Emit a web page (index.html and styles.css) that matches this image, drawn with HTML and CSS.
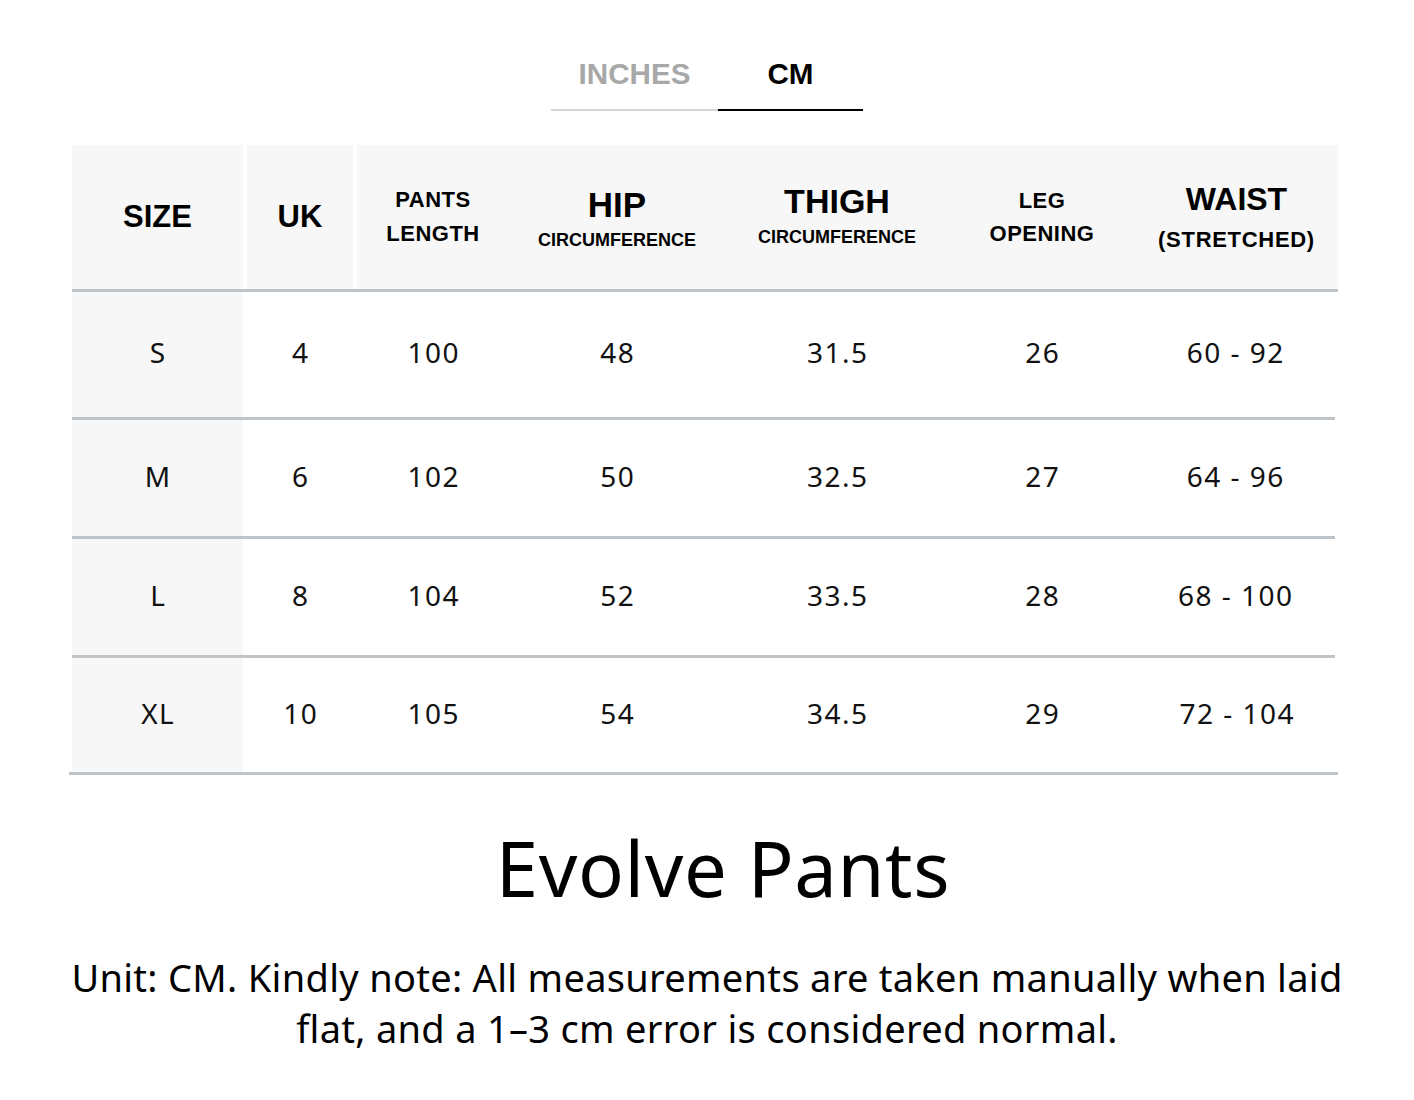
FILE: index.html
```html
<!DOCTYPE html>
<html lang="en">
<head>
<meta charset="utf-8">
<title>Evolve Pants – Size Chart</title>
<link rel="stylesheet" href="styles.css">
</head>
<body>
<div class="page">
  <div class="tabs">
    <div class="tab tab-inches">INCHES</div>
    <div class="tab tab-cm">CM</div>
  </div>

  <div class="chart">
    <div class="row head">
      <div class="hcell c-size"><span class="h-single">SIZE</span></div>
      <div class="hcell c-uk"><span class="h-single">UK</span></div>
      <div class="hcell c-pants"><span class="h-pair">PANTS</span><span class="h-pair">LENGTH</span></div>
      <div class="hcell c-hip"><span class="h-main">HIP</span><span class="h-sub">CIRCUMFERENCE</span></div>
      <div class="hcell c-thigh"><span class="h-main">THIGH</span><span class="h-sub">CIRCUMFERENCE</span></div>
      <div class="hcell c-leg"><span class="h-pair">LEG</span><span class="h-pair">OPENING</span></div>
      <div class="hcell c-waist"><span class="h-main">WAIST</span><span class="h-sub">(STRETCHED)</span></div>
    </div>

    <div class="row body r1">
      <div class="cell c-size">S</div><div class="cell c-uk">4</div><div class="cell">100</div><div class="cell">48</div><div class="cell">31.5</div><div class="cell">26</div><div class="cell">60 - 92</div>
    </div>
    <div class="row body r2">
      <div class="cell c-size">M</div><div class="cell c-uk">6</div><div class="cell">102</div><div class="cell">50</div><div class="cell">32.5</div><div class="cell">27</div><div class="cell">64 - 96</div>
    </div>
    <div class="row body r3">
      <div class="cell c-size">L</div><div class="cell c-uk">8</div><div class="cell">104</div><div class="cell">52</div><div class="cell">33.5</div><div class="cell">28</div><div class="cell">68 - 100</div>
    </div>
    <div class="row body r4 last">
      <div class="cell c-size">XL</div><div class="cell c-uk">10</div><div class="cell">105</div><div class="cell">54</div><div class="cell">34.5</div><div class="cell">29</div><div class="cell">72 - 104</div>
    </div>
  </div>

  <h1 class="title">Evolve Pants</h1>
  <p class="note">Unit: CM. Kindly note: All measurements are taken manually when laid<br>flat, and a 1–3 cm error is considered normal.</p>
</div>
</body>
</html>
```

FILE: styles.css
```css
* { box-sizing: border-box; }

html, body {
  margin: 0;
  padding: 0;
  background: #ffffff;
}

body {
  font-family: "Noto Sans", "Open Sans", sans-serif;
  color: #111111;
}

.page {
  width: 1414px;
  padding-top: 59px;
}

/* ---------- tabs ---------- */
.tabs {
  display: flex;
  justify-content: flex-start;
  margin-left: 551px;
}

.tab {
  font-family: "Liberation Sans", Arial, sans-serif;
  font-weight: 700;
  font-size: 29.6px;
  line-height: 30px;
  padding-bottom: 20px;
  text-align: center;
  border-bottom: 2px solid #d6d6d6;
}

.tab-inches {
  width: 167px;
  color: #a8a8a8;
}

.tab-cm {
  width: 145px;
  color: #000000;
  border-bottom-color: #000000;
}

/* ---------- chart ---------- */
.chart {
  margin-top: 34px;
  margin-left: 69px;
  width: 1269px;
  padding-left: 3px;
}

.row {
  display: grid;
  grid-template-columns: 175px 110px 152px 216px 224px 186px 1fr;
  border-bottom: 3px solid #bec4c7;
}

.row.body.r1, .row.body.r2, .row.body.r3 {
  margin-right: 3px;
}

.row.last {
  margin-left: -3px;
  padding-left: 3px;
}

.row.head { height: 147px; }
.row.r1 { height: 128px; }
.row.r2 { height: 119px; }
.row.r3 { height: 119px; }
.row.r4 { height: 117px; }

.hcell {
  background: #f7f7f7;
  display: flex;
  flex-direction: column;
  align-items: center;
  justify-content: center;
  font-family: "Liberation Sans", Arial, sans-serif;
  font-weight: 700;
  color: #000000;
  text-align: center;
}

.hcell.c-size, .hcell.c-uk {
  border-right: 4px solid #ffffff;
}

.h-single {
  font-size: 31px;
  line-height: 36px;
}

.h-pair {
  font-size: 22px;
  line-height: 33px;
  letter-spacing: 0.5px;
}

.c-pants .h-pair { line-height: 34px; }

.h-main { font-size: 34px; }
.h-sub { font-size: 18px; }

.c-hip .h-main { font-size: 35px; line-height: 46px; }
.c-hip .h-sub { line-height: 25px; }

.c-thigh .h-main { line-height: 41px; }
.c-thigh .h-sub { line-height: 31px; }

.c-waist .h-main { font-size: 32px; line-height: 45px; }
.c-waist .h-sub { font-size: 22px; line-height: 36px; letter-spacing: 0.7px; }

.cell {
  display: flex;
  align-items: center;
  justify-content: center;
  padding-bottom: 5px;
  padding-left: 1.5px;
  font-size: 28px;
  letter-spacing: 1.5px;
  color: #111111;
}

.cell.c-size {
  background: #f7f7f7;
  border-right: 4px solid transparent;
  background-clip: padding-box;
}

.cell.c-uk {
  padding-right: 4px;
}

/* ---------- title & note ---------- */
.title {
  margin: 56px 0 0;
  padding-left: 32px;
  font-size: 76px;
  line-height: 74px;
  letter-spacing: 0.6px;
  font-weight: 400;
  text-align: center;
  color: #000000;
}

.note {
  margin: 47px 0 0;
  font-size: 38px;
  line-height: 51px;
  letter-spacing: 0.3px;
  text-align: center;
  color: #000000;
}
```
